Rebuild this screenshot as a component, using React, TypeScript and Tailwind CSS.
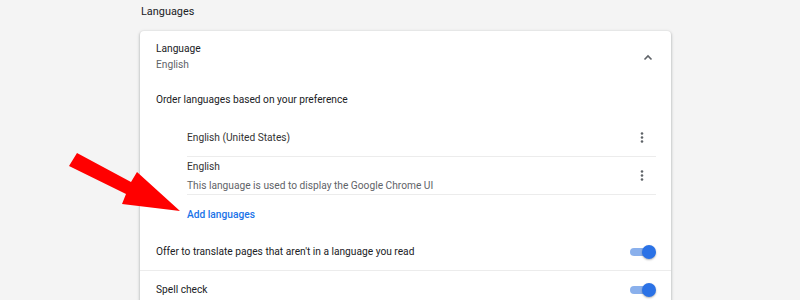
import React from "react";

function Kebab() {
  return (
    <svg width="4" height="11" viewBox="0 0 4 11" className="mr-[-1px] shrink-0">
      <circle cx="2" cy="1.5" r="1.3" fill="#5f6368" />
      <circle cx="2" cy="5.5" r="1.3" fill="#5f6368" />
      <circle cx="2" cy="9.5" r="1.3" fill="#5f6368" />
    </svg>
  );
}

function Toggle() {
  return (
    <div className="relative h-[14px] w-[26px] shrink-0">
      <div className="absolute left-0 top-[3px] h-[8px] w-[20px] rounded-full bg-[#8ab0ec]" />
      <div className="absolute right-0 top-0 h-[14px] w-[14px] rounded-full bg-[#2b72e6] shadow-[0_1px_2px_rgba(0,0,0,0.3)]" />
    </div>
  );
}

function Arrow() {
  return (
    <svg className="absolute left-0 top-0" width="200" height="230" viewBox="0 0 200 230">
      <polygon
        points="77,153 131,182 137,172 180,211 122,204 126,194 69,166"
        fill="#ff0000"
      />
    </svg>
  );
}

export default function App() {
  return (
    <div
      className="relative h-[300px] w-[800px] overflow-hidden bg-[#f4f4f4] pl-[140px] text-[10.2px] text-[#202124]"
      style={{ fontFamily: "Roboto, 'Liberation Sans', sans-serif" }}
    >
      <div className="h-[31px] pl-[1px] pt-[4px] text-[10.9px] leading-[16px] text-[#202124]">Languages</div>

      <div className="w-[531px] rounded-[4px] bg-white shadow-[0_1px_2px_0_rgba(60,64,67,0.3),0_1px_3px_1px_rgba(60,64,67,0.15)]">
        {/* Language header */}
        <div className="flex h-[50px] items-center justify-between pl-[16px] pr-[18px] pt-[2px]">
          <div className="leading-[16px]">
            <div>Language</div>
            <div className="text-[#5f6368]">English</div>
          </div>
          <svg width="10" height="7" viewBox="0 0 10 7">
            <path d="M1.5 5.5 L5 2 L8.5 5.5" fill="none" stroke="#5f6368" strokeWidth="1.6" />
          </svg>
        </div>

        <div className="flex h-[38px] items-center pl-[16px]">Order languages based on your preference</div>

        {/* Language list */}
        <div className="ml-[47px] mr-[15px]">
          <div className="flex h-[38px] items-center justify-between border-b border-[#ececec] pr-[13px]">
            <span className="text-[#333]">English (United States)</span>
            <Kebab />
          </div>
          <div className="flex h-[38px] items-center justify-between border-b border-[#ececec] pr-[13px]">
            <div className="leading-[19px]">
              <div className="text-[#333]">English</div>
              <div className="text-[#5f6368]">This language is used to display the Google Chrome UI</div>
            </div>
            <Kebab />
          </div>
          <div className="flex h-[38px] items-center pt-[1px] font-medium text-[#1a73e8]">Add languages</div>
        </div>

        <div className="flex h-[38px] items-center justify-between border-b border-[#ececec] pl-[16px] pr-[15px]">
          <span>Offer to translate pages that aren't in a language you read</span>
          <Toggle />
        </div>
        <div className="flex h-[38px] items-center justify-between pl-[16px] pr-[15px]">
          <span>Spell check</span>
          <Toggle />
        </div>
      </div>

      <Arrow />
    </div>
  );
}
